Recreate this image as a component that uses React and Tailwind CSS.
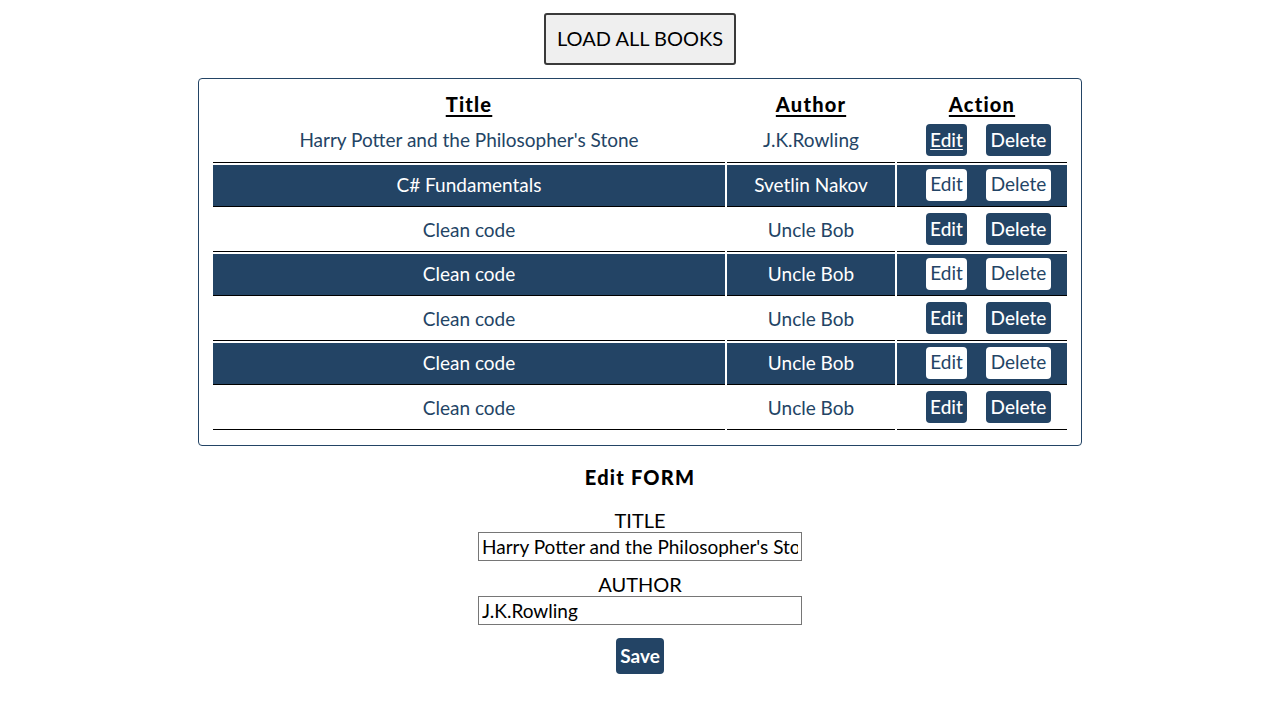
import React from "react";

const rows = [
  { title: "Harry Potter and the Philosopher's Stone", author: "J.K.Rowling", dark: false, underline: true },
  { title: "C# Fundamentals", author: "Svetlin Nakov", dark: true },
  { title: "Clean code", author: "Uncle Bob", dark: false },
  { title: "Clean code", author: "Uncle Bob", dark: true },
  { title: "Clean code", author: "Uncle Bob", dark: false },
  { title: "Clean code", author: "Uncle Bob", dark: true },
  { title: "Clean code", author: "Uncle Bob", dark: false },
];

export default function App() {
  return (
    <div className="min-h-[720px] bg-white flex flex-col items-center pt-[13px] font-['Lato','Open_Sans',sans-serif] text-black">
      <button className="w-[192px] h-[52px] bg-[#efefef] border-2 border-[#3a3a3a] rounded-[3px] text-[20px] leading-none pb-[2px]">
        LOAD ALL BOOKS
      </button>

      <div className="mt-[13px] w-[884px] border border-[#234465] rounded-[4px] pt-[11px] pb-[13px]">
        <table className="w-[858px] mx-auto border-separate border-spacing-[2px] text-[19px]">
          <thead>
            <tr>
              <th className="h-[26px] w-[512px] p-0 pb-[2px] text-[20px] font-black tracking-[1.2px] underline underline-offset-[3px] decoration-2 leading-none">Title</th>
              <th className="h-[26px] w-[168px] p-0 pb-[2px] text-[20px] font-black tracking-[1.2px] underline underline-offset-[3px] decoration-2 leading-none">Author</th>
              <th className="h-[26px] p-0 pb-[2px] text-[20px] font-black tracking-[1.2px] underline underline-offset-[3px] decoration-2 leading-none">Action</th>
            </tr>
          </thead>
          <tbody>
            {rows.map((r, i) => {
              const cell = r.dark
                ? "bg-[#234465] text-white"
                : "bg-white text-[#234465]";
              const btn = r.dark
                ? "bg-white text-[#234465]"
                : "bg-[#234465] text-white font-medium";
              const pad = i === 0 ? "pb-[3px]" : "pb-[1px]";
              return (
                <tr key={i}>
                  <td className={`h-[42.5px] p-0 ${pad} text-center border-b border-black leading-none ${cell}`}>{r.title}</td>
                  <td className={`h-[42.5px] p-0 ${pad} text-center border-b border-black leading-none ${cell}`}>{r.author}</td>
                  <td className={`h-[42.5px] p-0 pb-[1px] border-b border-black ${cell}`}>
                    <div className="flex justify-center items-center gap-[19px] pl-[13px]">
                      <button className={`w-[41px] h-[32px] rounded-[4px] text-[19px] leading-none pb-[2px] ${btn} ${r.underline ? "underline underline-offset-2" : ""}`}>
                        Edit
                      </button>
                      <button className={`w-[65px] h-[32px] rounded-[4px] text-[19px] leading-none pb-[2px] ${btn}`}>
                        Delete
                      </button>
                    </div>
                  </td>
                </tr>
              );
            })}
          </tbody>
        </table>
      </div>

      <div className="mt-[18px] text-[20px] font-black tracking-[1.2px] leading-[27px]">Edit FORM</div>

      <div className="mt-[17px] flex flex-col items-center">
        <label className="text-[20px] leading-[24px]">TITLE</label>
        <input
          readOnly
          value="Harry Potter and the Philosopher's Stone"
          className="w-[324px] h-[29px] border border-[#767676] px-[3px] text-[19px] leading-none text-black outline-none font-['Lato',sans-serif]"
        />
        <label className="mt-[11px] text-[20px] leading-[24px]">AUTHOR</label>
        <input
          readOnly
          value="J.K.Rowling"
          className="w-[324px] h-[29px] border border-[#767676] px-[3px] text-[19px] leading-none text-black outline-none font-['Lato',sans-serif]"
        />
        <button className="mt-[13px] w-[48px] h-[36px] rounded-[4px] bg-[#234465] text-white text-[19px] font-bold leading-none pb-[1px]">
          Save
        </button>
      </div>
    </div>
  );
}
